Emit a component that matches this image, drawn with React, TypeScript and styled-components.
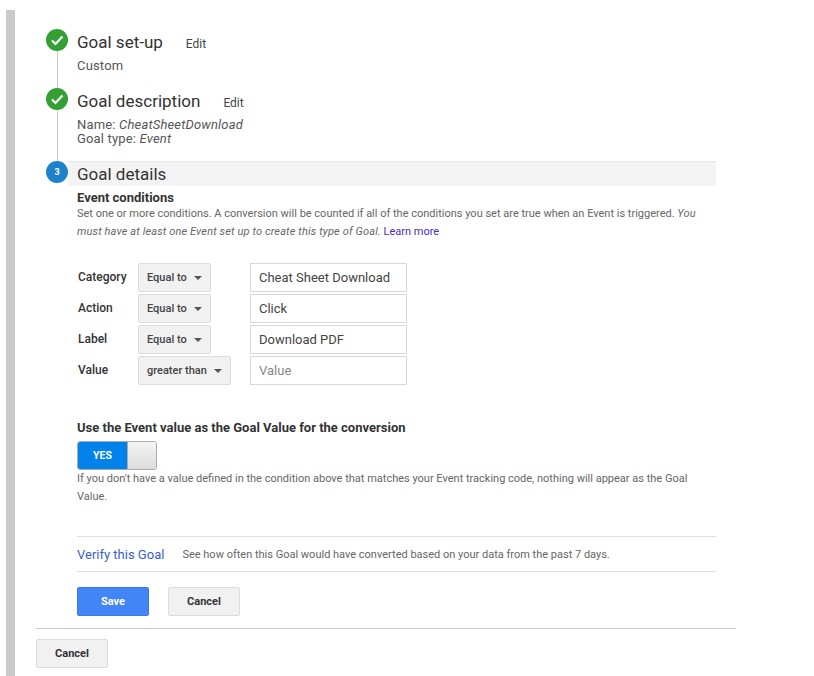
import React from "react";
import styled, { createGlobalStyle } from "styled-components";

const GlobalStyle = createGlobalStyle`
  html, body {
    margin: 0;
    padding: 0;
    background: #fff;
    font-family: Roboto, "Liberation Sans", sans-serif;
    color: #333;
  }
`;

const Page = styled.div`
  display: flex;
  width: 814px;
  height: 676px;
  overflow: hidden;
  padding: 10px 0 0 6px;
  box-sizing: border-box;
`;

const Rail = styled.div`
  width: 9px;
  flex-shrink: 0;
  background: #cacaca;
`;

const Main = styled.div`
  width: 721px;
  padding: 19px 0 0 21px;
  box-sizing: border-box;
`;

const Step = styled.section<{ $height?: number }>`
  display: grid;
  grid-template-columns: 22px 1fr;
  column-gap: 9px;
  width: 670px;
  margin-left: 10px;
  height: ${(p) => (p.$height ? `${p.$height}px` : "auto")};
`;

const Marker = styled.div`
  display: flex;
  flex-direction: column;
  align-items: center;
`;

const Line = styled.div`
  width: 1px;
  flex: 1;
  background: #c8c8c8;
`;

const Circle = styled.div<{ $color: string }>`
  width: 22px;
  height: 22px;
  flex-shrink: 0;
  border-radius: 50%;
  background: ${(p) => p.$color};
  color: #fff;
  font-size: 9px;
  font-weight: 700;
  display: flex;
  align-items: center;
  justify-content: center;
  position: relative;
  z-index: 1;
`;

const StepHead = styled.div`
  display: flex;
  align-items: baseline;
  height: 30px;
  line-height: 27px;
`;

const StepTitle = styled.h2`
  margin: 0;
  font-size: 17px;
  font-weight: 400;
  color: #333;
`;

const EditLink = styled.a`
  margin-left: 23px;
  font-size: 12px;
  color: #444;
`;

const Summary = styled.div`
  font-size: 13px;
  line-height: 14px;
  color: #555;
  letter-spacing: 0.17px;
  em {
    font-style: italic;
  }
`;

const CurrentHead = styled.div`
  margin-left: -9px;
  padding-left: 9px;
  height: 25px;
  box-sizing: border-box;
  border-top: 1px solid #e5e5e5;
  background: #f3f3f3;
  line-height: 25px;
`;

const Details = styled.div`
  width: 639px;
`;

const SubHead = styled.h3`
  margin: 4px 0 0;
  font-size: 13px;
  line-height: 15px;
  font-weight: 700;
  color: #333;
`;

const Help = styled.p`
  margin: 0;
  font-size: 11px;
  line-height: 18px;
  color: #666;
  em {
    letter-spacing: 0.13px;
  }
  a {
    color: #4a2bbf;
  }
`;

const Conditions = styled.div`
  display: grid;
  grid-template-columns: 61px 112px 157px;
  grid-auto-rows: 29px;
  row-gap: 2px;
  margin-top: 22px;
  align-items: center;
`;

const RowLabel = styled.div`
  font-size: 12px;
  font-weight: 500;
  color: #333;
  padding-left: 1px;
  margin-top: -1px;
`;

const SelectCell = styled.div`
  display: flex;
`;

const Select = styled.div`
  height: 29px;
  box-sizing: border-box;
  padding: 0 8px;
  display: flex;
  align-items: center;
  gap: 7px;
  background: #f1f1f1;
  border: 1px solid #dcdcdc;
  border-radius: 2px;
  font-size: 11px;
  font-weight: 500;
  color: #444;
`;

const Caret = styled.span`
  width: 0;
  height: 0;
  border-left: 4px solid transparent;
  border-right: 4px solid transparent;
  border-top: 4px solid #555;
`;

const ValueBox = styled.div<{ $placeholder?: boolean }>`
  width: 157px;
  height: 29px;
  box-sizing: border-box;
  border: 1px solid #d9d9d9;
  padding: 0 8px;
  display: flex;
  align-items: center;
  font-size: 13px;
  color: ${(p) => (p.$placeholder ? "#888" : "#444")};
`;

const ToggleTitle = styled(SubHead)`
  margin: 35px 0 0;
`;

const Toggle = styled.div`
  display: flex;
  width: 80px;
  height: 29px;
  margin-top: 6px;
  box-sizing: border-box;
  border: 1px solid #aaa;
  border-radius: 3px;
  overflow: hidden;
`;

const ToggleOn = styled.div`
  width: 49px;
  background: #0082ea;
  color: #fff;
  font-size: 10.5px;
  font-weight: 700;
  display: flex;
  align-items: center;
  justify-content: center;
`;

const ToggleKnob = styled.div`
  flex: 1;
  border-left: 1px solid #aaa;
  background: linear-gradient(#f4f4f4, #dcdcdc);
`;

const VerifyRow = styled.div`
  display: flex;
  align-items: center;
  height: 34px;
  margin-top: 30px;
  border-top: 1px solid #e0e0e0;
  border-bottom: 1px solid #e0e0e0;
`;

const VerifyLink = styled.a`
  font-size: 13px;
  color: #3a5fc8;
  margin-right: 18px;
`;

const VerifyText = styled.span`
  font-size: 11px;
  color: #666;
`;

const Buttons = styled.div`
  display: flex;
  gap: 19px;
  margin-top: 15px;
`;

const Button = styled.button<{ $primary?: boolean }>`
  width: 72px;
  height: 29px;
  padding: 0;
  border-radius: 2px;
  border: 1px solid ${(p) => (p.$primary ? "#3b78e7" : "#dcdcdc")};
  background: ${(p) => (p.$primary ? "#4285f4" : "#f1f1f1")};
  color: ${(p) => (p.$primary ? "#fff" : "#333")};
  font-family: inherit;
  font-size: 11px;
  font-weight: 700;
`;

const Footer = styled.div`
  margin-top: 12px;
  padding-top: 10px;
  border-top: 1px solid #c8c8c8;
  width: 700px;
`;

const Check = () => (
  <svg width="14" height="14" viewBox="0 0 14 14" fill="none">
    <path d="M2 7.5 L5.5 11 L12.5 3.5" stroke="#fff" strokeWidth="2.2" />
  </svg>
);

const conditions = [
  { label: "Category", op: "Equal to", value: "Cheat Sheet Download" },
  { label: "Action", op: "Equal to", value: "Click" },
  { label: "Label", op: "Equal to", value: "Download PDF" },
  { label: "Value", op: "greater than", value: "Value", placeholder: true },
];

export default function App() {
  return (
    <>
      <GlobalStyle />
      <Page>
        <Rail />
        <Main>
          <Step $height={59}>
            <Marker>
              <Circle $color="#34a034">
                <Check />
              </Circle>
              <Line />
            </Marker>
            <div>
              <StepHead>
                <StepTitle>Goal set-up</StepTitle>
                <EditLink>Edit</EditLink>
              </StepHead>
              <Summary>Custom</Summary>
            </div>
          </Step>
          <Step $height={73}>
            <Marker>
              <Circle $color="#34a034">
                <Check />
              </Circle>
              <Line />
            </Marker>
            <div>
              <StepHead>
                <StepTitle>Goal description</StepTitle>
                <EditLink>Edit</EditLink>
              </StepHead>
              <Summary>
                Name: <em>CheatSheetDownload</em>
                <br />
                Goal type: <em>Event</em>
              </Summary>
            </div>
          </Step>
          <Step>
            <Marker>
              <Circle $color="#1f80cc">3</Circle>
            </Marker>
            <Details>
              <CurrentHead>
                <StepTitle>Goal details</StepTitle>
              </CurrentHead>
              <SubHead>Event conditions</SubHead>
              <Help>
                Set one or more conditions. A conversion will be counted if all of the conditions you set are true when an Event is triggered.{" "}
                <em>You</em>
                <br />
                <em>must have at least one Event set up to create this type of Goal.</em> <a>Learn more</a>
              </Help>
              <Conditions>
                {conditions.map((c) => (
                  <React.Fragment key={c.label}>
                    <RowLabel>{c.label}</RowLabel>
                    <SelectCell>
                      <Select>
                        {c.op}
                        <Caret />
                      </Select>
                    </SelectCell>
                    <ValueBox $placeholder={c.placeholder}>{c.value}</ValueBox>
                  </React.Fragment>
                ))}
              </Conditions>
              <ToggleTitle>Use the Event value as the Goal Value for the conversion</ToggleTitle>
              <Toggle>
                <ToggleOn>YES</ToggleOn>
                <ToggleKnob />
              </Toggle>
              <Help>
                If you don't have a value defined in the condition above that matches your Event tracking code, nothing will appear as the Goal Value.
              </Help>
              <VerifyRow>
                <VerifyLink>Verify this Goal</VerifyLink>
                <VerifyText>See how often this Goal would have converted based on your data from the past 7 days.</VerifyText>
              </VerifyRow>
              <Buttons>
                <Button $primary>Save</Button>
                <Button>Cancel</Button>
              </Buttons>
            </Details>
          </Step>
          <Footer>
            <Button>Cancel</Button>
          </Footer>
        </Main>
      </Page>
    </>
  );
}
